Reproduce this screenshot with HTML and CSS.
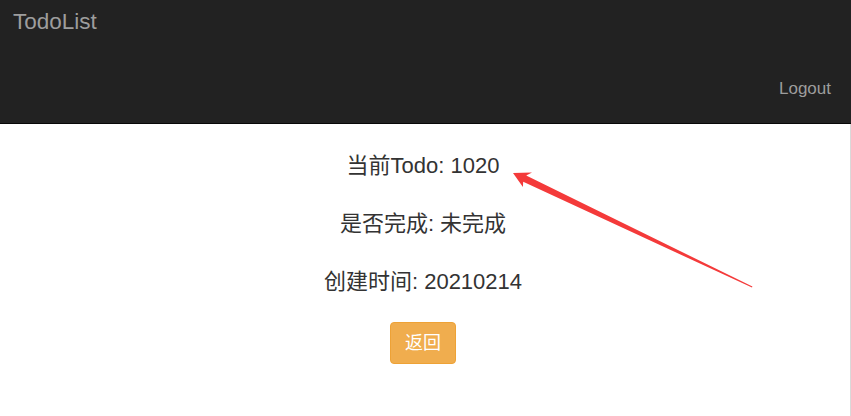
FILE: index.html
```html
<!DOCTYPE html>
<html lang="zh-CN">
<head>
<meta charset="utf-8">
<title>TodoList</title>
<link rel="stylesheet" href="styles.css">
</head>
<body>
<nav class="navbar">
  <div class="brand-row"><a class="brand" href="#">TodoList</a></div>
  <div class="nav-row"><a class="nav-link" href="#">Logout</a></div>
</nav>
<main class="page">
  <div class="details">
    <p class="line">当前Todo: 1020</p>
    <p class="line">是否完成: 未完成</p>
    <p class="line">创建时间: 20210214</p>
  </div>
  <button class="btn-back" type="button">返回</button>
</main>
<svg class="annotation" width="851" height="416" viewBox="0 0 851 416" aria-hidden="true">
  <polygon fill="#f43a3a" points="513,173 532,172.6 526.2,175.4 752.4,286.6 752,287.6 523.2,181.8 522.9,187.1"/>
</svg>
</body>
</html>
```

FILE: styles.css
```css
html, body {
  margin: 0;
  padding: 0;
  background: #fff;
}
body {
  font-family: "Liberation Sans", Arial, "Noto Sans CJK SC", sans-serif;
  color: #333;
  width: 851px;
  height: 416px;
  overflow: hidden;
  position: relative;
}
.navbar {
  height: 123px;
  background: #222;
  border-bottom: 1px solid #080808;
  display: flex;
  flex-direction: column;
}
.brand-row {
  padding: 10px 13px 0;
}
.brand {
  font-size: 22.5px;
  line-height: 24px;
  color: #9d9d9d;
  text-decoration: none;
}
.nav-row {
  margin-top: auto;
  padding: 0 20px 24px 0;
  display: flex;
  justify-content: flex-end;
}
.nav-link {
  font-size: 17px;
  line-height: 20px;
  color: #9d9d9d;
  text-decoration: none;
}
.page {
  height: 292px;
  border-right: 1px solid #d9d9d9;
  padding: 27px 4px 0 0;
  box-sizing: border-box;
  display: flex;
  flex-direction: column;
  align-items: center;
}
.details {
  display: flex;
  flex-direction: column;
  align-items: center;
  gap: 28px;
}
.line {
  margin: 0;
  font-size: 22px;
  line-height: 30px;
}
.btn-back {
  margin-top: 25px;
  font-family: "Liberation Sans", Arial, "Noto Sans CJK SC", sans-serif;
  font-size: 18px;
  line-height: 24px;
  padding: 8px 14px;
  color: #fff;
  background: #f0ad4e;
  border: 1px solid #eea236;
  border-radius: 4px;
}
.annotation {
  position: absolute;
  left: 0;
  top: 0;
  pointer-events: none;
}
```
